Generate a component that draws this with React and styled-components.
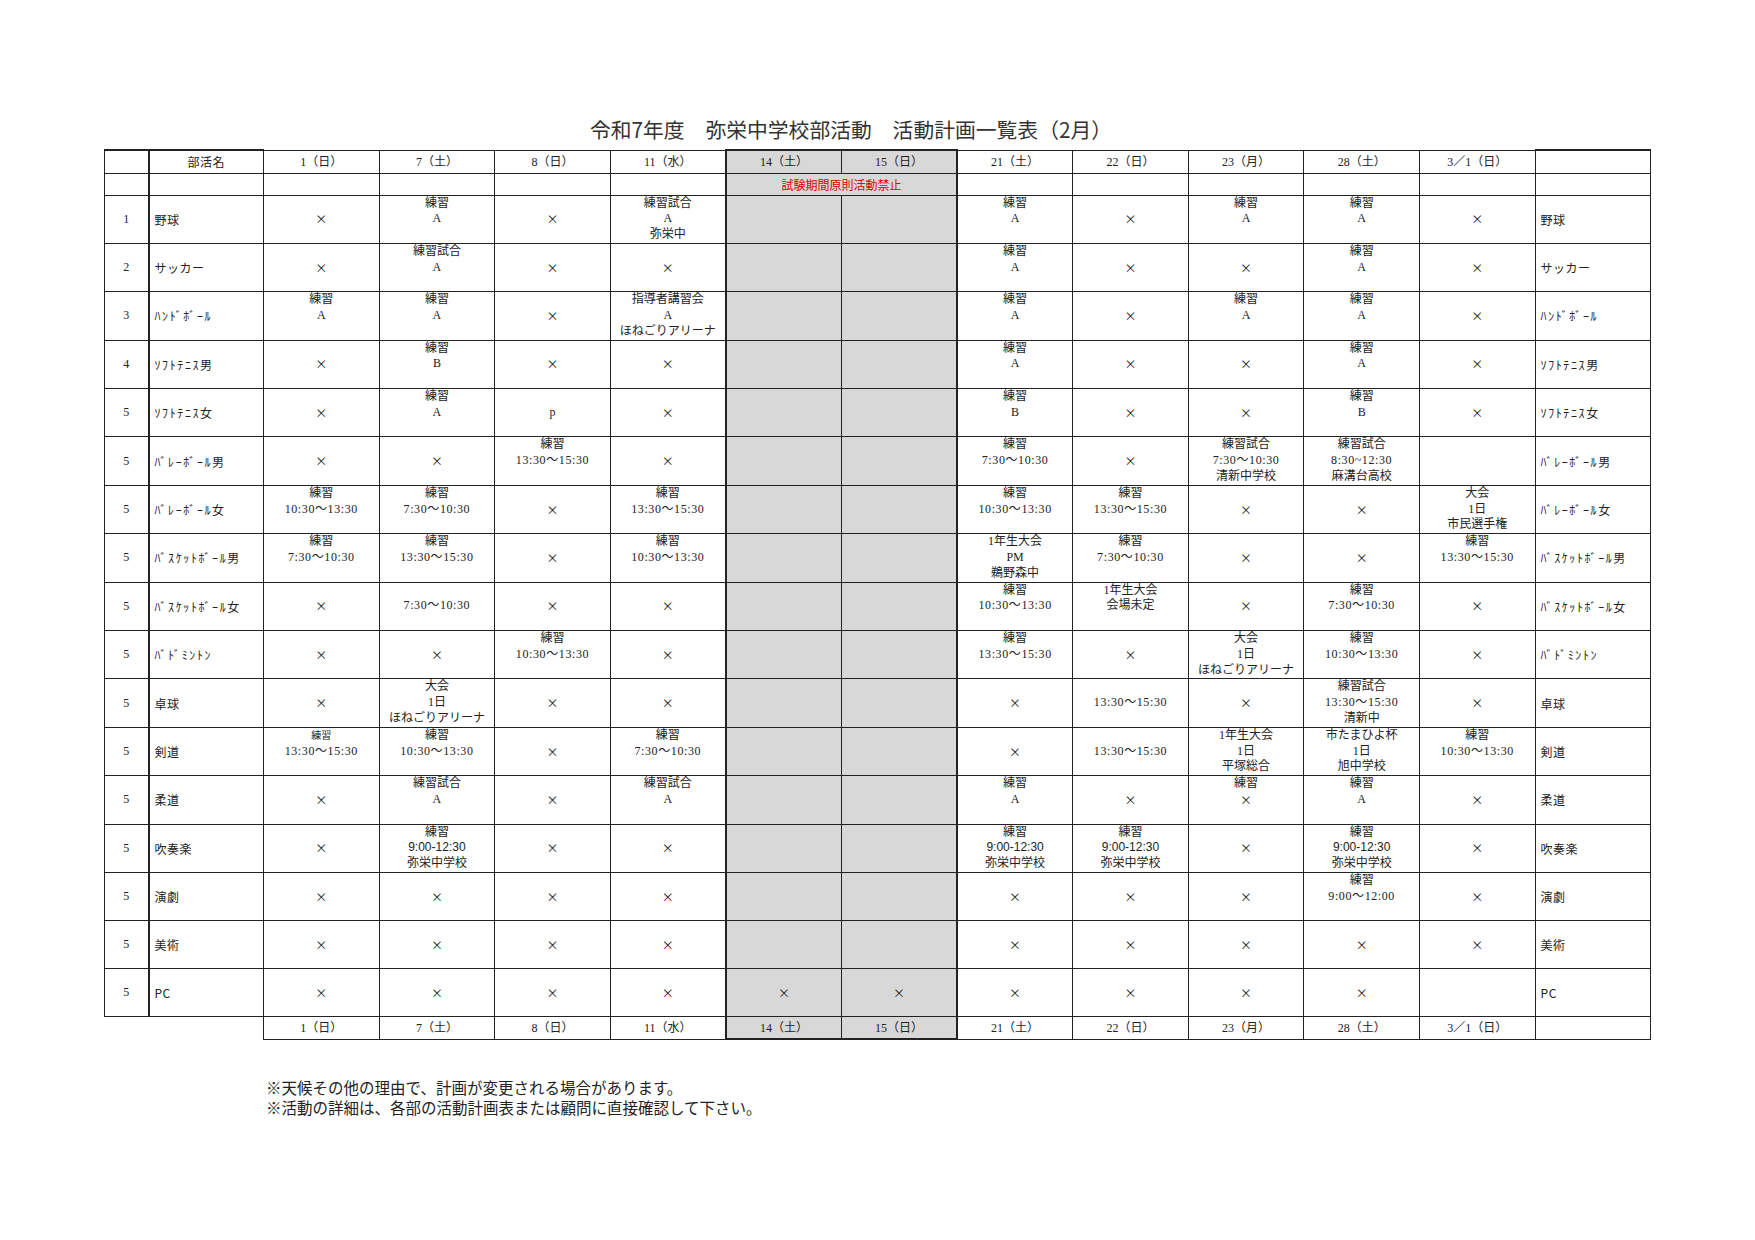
import React from "react";
import styled, { createGlobalStyle } from "styled-components";

const GlobalStyle = createGlobalStyle`
  body {
    margin: 0;
    background: #fff;
    color: #222;
    font-family: "Liberation Serif", "Noto Sans CJK JP", serif;
  }
`;

const days = [
  "1（日）",
  "7（土）",
  "8（日）",
  "11（水）",
  "14（土）",
  "15（日）",
  "21（土）",
  "22（日）",
  "23（月）",
  "28（土）",
  "3／1（日）",
];

// 14(土) and 15(日) are the exam period
const isGray = (i) => i === 4 || i === 5;

const X = "×";

const clubs = [
  ["1", "野球", [X, "練習/A", X, "練習試合/A/弥栄中", "", "", "練習/A", X, "練習/A", "練習/A", X]],
  ["2", "サッカー", [X, "練習試合/A", X, X, "", "", "練習/A", X, X, "練習/A", X]],
  ["3", "ﾊﾝﾄﾞﾎﾞｰﾙ", ["練習/A", "練習/A", X, "指導者講習会/A/ほねごりアリーナ", "", "", "練習/A", X, "練習/A", "練習/A", X], true],
  ["4", "ｿﾌﾄﾃﾆｽ男", [X, "練習/B", X, X, "", "", "練習/A", X, X, "練習/A", X], true],
  ["5", "ｿﾌﾄﾃﾆｽ女", [X, "練習/A", "p", X, "", "", "練習/B", X, X, "練習/B", X], true],
  ["5", "ﾊﾞﾚｰﾎﾞｰﾙ男", [X, X, "練習/13:30～15:30", X, "", "", "練習/7:30～10:30", X, "練習試合/7:30～10:30/清新中学校", "練習試合/8:30~12:30/麻溝台高校", ""], true],
  ["5", "ﾊﾞﾚｰﾎﾞｰﾙ女", ["練習/10:30～13:30", "練習/7:30～10:30", X, "練習/13:30～15:30", "", "", "練習/10:30～13:30", "練習/13:30～15:30", X, X, "大会/1日/市民選手権"], true],
  ["5", "ﾊﾞｽｹｯﾄﾎﾞｰﾙ男", ["練習/7:30～10:30", "練習/13:30～15:30", X, "練習/10:30～13:30", "", "", "1年生大会/PM/鵜野森中", "練習/7:30～10:30", X, X, "練習/13:30～15:30"], true],
  ["5", "ﾊﾞｽｹｯﾄﾎﾞｰﾙ女", [X, "7:30～10:30", X, X, "", "", "練習/10:30～13:30", "1年生大会/会場未定", X, "練習/7:30～10:30", X], true],
  ["5", "ﾊﾞﾄﾞﾐﾝﾄﾝ", [X, X, "練習/10:30～13:30", X, "", "", "練習/13:30～15:30", X, "大会/1日/ほねごりアリーナ", "練習/10:30～13:30", X], true],
  ["5", "卓球", [X, "大会/1日/ほねごりアリーナ", X, X, "", "", X, "13:30～15:30", X, "練習試合/13:30～15:30/清新中", X]],
  ["5", "剣道", ["^練習/13:30～15:30", "練習/10:30～13:30", X, "練習/7:30～10:30", "", "", X, "13:30～15:30", "1年生大会/1日/平塚総合", "市たまひよ杯/1日/旭中学校", "練習/10:30～13:30"]],
  ["5", "柔道", [X, "練習試合/A", X, "練習試合/A", "", "", "練習/A", X, "練習/×", "練習/A", X]],
  ["5", "吹奏楽", [X, "練習/9:00-12:30/弥栄中学校", X, X, "", "", "練習/9:00-12:30/弥栄中学校", "練習/9:00-12:30/弥栄中学校", X, "練習/9:00-12:30/弥栄中学校", X]],
  ["5", "演劇", [X, X, X, X, "", "", X, X, X, "練習/9:00～12:00", X]],
  ["5", "美術", [X, X, X, X, "", "", X, X, X, X, X]],
  ["5", "PC", [X, X, X, X, X, X, X, X, X, X, ""]],
];

const Page = styled.div`
  padding: 117px 0 0 104px;
  width: 1546px;
`;

const Title = styled.h1`
  margin: 0 52px 7px 0;
  font-family: "Noto Sans CJK JP", sans-serif;
  font-weight: 400;
  font-size: 20.8px;
  line-height: 25px;
  text-align: center;
  color: #333;
`;

const Table = styled.table`
  border-collapse: collapse;
  table-layout: fixed;
  width: 1546px;
`;

const Row = styled.tr`
  height: ${(p) => p.$h}px;
`;

const Cell = styled.td`
  border: 1px solid #222;
  border-left-width: ${(p) => (p.$thickLeft ? 2 : 1)}px;
  border-right-width: ${(p) => (p.$thickRight ? 2 : 1)}px;
  border-top-width: ${(p) => (p.$thickTop ? 2 : 1)}px;
  border-bottom-width: ${(p) => (p.$thickBottom ? 2 : 1)}px;
  background: ${(p) => (p.$gray ? "#d8d8d8" : "#fff")};
  padding: 0;
  text-align: center;
  vertical-align: middle;
  font-size: 12px;
  line-height: 15px;
  white-space: nowrap;
  overflow: hidden;
`;

const DayCell = styled(Cell)`
  font-size: 12px;
  line-height: 14px;
  font-family: "Liberation Serif", "Noto Sans CJK JP", serif;
`;

const EmptyCell = styled.td`
  border: none;
  padding: 0;
`;

const NoCell = styled(Cell)`
  font-size: 12px;
`;

const NameCell = styled(Cell)`
  text-align: ${(p) => (p.$center ? "center" : "left")};
  padding-left: ${(p) => (p.$center ? 0 : 5)}px;
  font-family: "Noto Sans CJK JP", sans-serif;
  font-size: 12px;
  letter-spacing: ${(p) => (p.$half ? 1.6 : 0.5)}px;
`;

const Notice = styled.div`
  color: #e00000;
  font-family: "Noto Sans CJK JP", sans-serif;
  font-size: 12px;
`;

const Line = styled.div`
  height: 15.8px;
  line-height: 15.8px;
  font-family: ${(p) =>
    p.$sans
      ? '"Liberation Sans", "Noto Sans CJK JP", sans-serif'
      : p.$cjk
      ? '"Noto Sans CJK JP", sans-serif'
      : '"Liberation Serif", "Noto Sans CJK JP", serif'};
  font-size: ${(p) => (p.$small ? 10 : 12)}px;
  letter-spacing: ${(p) => (p.$time ? 0.6 : 0)}px;
`;

const Notes = styled.div`
  margin: 38px 0 0 162px;
  font-family: "Noto Sans CJK JP", sans-serif;
  font-size: 15.5px;
  line-height: 19.5px;
  color: #222;
`;

function Content({ text }) {
  if (!text) return null;
  const parts = text.split("/");
  const lines = parts.length === 2 ? [...parts, ""] : parts;
  return lines.map((raw, i) => {
    const small = raw.startsWith("^");
    const t = small ? raw.slice(1) : raw;
    const time = /\d:\d\d/.test(t);
    const sans = /\d-\d/.test(t);
    return (
      <Line key={i} $small={small} $time={time && !sans} $sans={sans} $cjk={t === X}>
        {t || "\u00a0"}
      </Line>
    );
  });
}

function DayRow({ bottom }) {
  return (
    <Row $h={23}>
      {bottom ? (
        <>
          <EmptyCell />
          <EmptyCell />
        </>
      ) : (
        <>
          <Cell $thickTop />
          <NameCell $thickTop $thickLeft $center>
            部活名
          </NameCell>
        </>
      )}
      {days.map((d, i) => (
        <DayCell
          key={d}
          $gray={isGray(i)}
          $thickLeft={i === 4}
          $thickRight={i === 5}
          $thickTop={!bottom && isGray(i)}
          $thickBottom={bottom && isGray(i)}
        >
          {d}
        </DayCell>
      ))}
      <Cell $thickTop={!bottom} />
    </Row>
  );
}

export default function App() {
  return (
    <>
      <GlobalStyle />
      <Page>
        <Title>令和7年度　弥栄中学校部活動　活動計画一覧表（2月）</Title>
        <Table>
          <colgroup>
            <col style={{ width: 44 }} />
            <col style={{ width: 115 }} />
            {days.map((d) => (
              <col key={d} style={{ width: 115.6 }} />
            ))}
            <col style={{ width: 115.8 }} />
          </colgroup>
          <tbody>
            <DayRow />
            <Row $h={22}>
              <Cell />
              <Cell $thickLeft />
              {days.slice(0, 4).map((d) => (
                <Cell key={d} />
              ))}
              <Cell colSpan={2} $gray $thickLeft $thickRight>
                <Notice>試験期間原則活動禁止</Notice>
              </Cell>
              {days.slice(6).map((d) => (
                <Cell key={d} />
              ))}
              <Cell />
            </Row>
            {clubs.map(([no, name, cells, half], r) => (
              <Row key={r} $h={47.75}>
                <NoCell>{no}</NoCell>
                <NameCell $thickLeft $half={half}>
                  {name}
                </NameCell>
                {cells.map((c, i) => (
                  <Cell key={i} $gray={isGray(i)} $thickLeft={i === 4} $thickRight={i === 5}>
                    <Content text={c} />
                  </Cell>
                ))}
                <NameCell $half={half}>{name}</NameCell>
              </Row>
            ))}
            <DayRow bottom />
          </tbody>
        </Table>
        <Notes>
          ※天候その他の理由で、計画が変更される場合があります。
          <br />
          ※活動の詳細は、各部の活動計画表または顧問に直接確認して下さい。
        </Notes>
      </Page>
    </>
  );
}
